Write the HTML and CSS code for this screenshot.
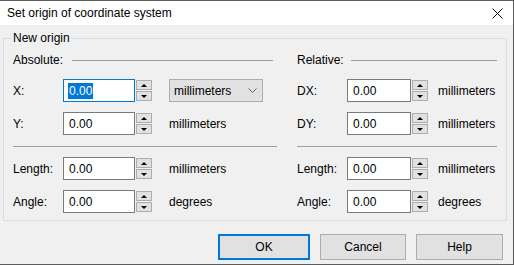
FILE: index.html
```
<!DOCTYPE html>
<html lang="en">
<head>
    <meta charset="UTF-8">
    <title>Set origin of coordinate system</title>
    <link rel="stylesheet" href="styles.css">
</head>
<body>
    <div class="window">
        <div class="titlebar">
            <span class="title">Set origin of coordinate system</span>
            <svg class="close" width="11" height="11" viewBox="0 0 11 11">
                <path d="M0.5 0.5 L10.5 10.5 M10.5 0.5 L0.5 10.5" stroke="#000" stroke-width="1"/>
            </svg>
        </div>

        <div class="content">
            <div class="group">
                <span class="legend">New origin</span>
                <div class="columns">
                    <div class="column left">
                        <div class="header">
                            <span>Absolute:</span>
                            <span class="line"></span>
                        </div>
                        <div class="row first">
                            <span class="label">X:</span>
                            <div class="field focused"><span class="selected">0.00</span></div>
                            <div class="spin"><span class="up"></span><span class="down"></span></div>
                            <div class="combo">
                                <span>millimeters</span>
                                <svg width="9" height="5" viewBox="0 0 9 5">
                                    <path d="M0.5 0.5 L4.5 4.5 L8.5 0.5" fill="none" stroke="#606060" stroke-width="1"/>
                                </svg>
                            </div>
                        </div>
                        <div class="row">
                            <span class="label">Y:</span>
                            <div class="field">0.00</div>
                            <div class="spin"><span class="up"></span><span class="down"></span></div>
                            <span class="unit">millimeters</span>
                        </div>
                        <div class="separator"></div>
                        <div class="row">
                            <span class="label">Length:</span>
                            <div class="field">0.00</div>
                            <div class="spin"><span class="up"></span><span class="down"></span></div>
                            <span class="unit">millimeters</span>
                        </div>
                        <div class="row">
                            <span class="label">Angle:</span>
                            <div class="field">0.00</div>
                            <div class="spin"><span class="up"></span><span class="down"></span></div>
                            <span class="unit">degrees</span>
                        </div>
                    </div>

                    <div class="column right">
                        <div class="header">
                            <span>Relative:</span>
                            <span class="line"></span>
                        </div>
                        <div class="row first">
                            <span class="label">DX:</span>
                            <div class="field">0.00</div>
                            <div class="spin"><span class="up"></span><span class="down"></span></div>
                            <span class="unit">millimeters</span>
                        </div>
                        <div class="row">
                            <span class="label">DY:</span>
                            <div class="field">0.00</div>
                            <div class="spin"><span class="up"></span><span class="down"></span></div>
                            <span class="unit">millimeters</span>
                        </div>
                        <div class="separator"></div>
                        <div class="row">
                            <span class="label">Length:</span>
                            <div class="field">0.00</div>
                            <div class="spin"><span class="up"></span><span class="down"></span></div>
                            <span class="unit">millimeters</span>
                        </div>
                        <div class="row">
                            <span class="label">Angle:</span>
                            <div class="field">0.00</div>
                            <div class="spin"><span class="up"></span><span class="down"></span></div>
                            <span class="unit">degrees</span>
                        </div>
                    </div>
                </div>
            </div>

            <div class="buttons">
                <button type="button" class="ok">OK</button>
                <button type="button" class="cancel">Cancel</button>
                <button type="button" class="help">Help</button>
            </div>
        </div>
    </div>
</body>
</html>
```

FILE: styles.css
```
body {
    margin: 0;
    font-family: "Liberation Sans", Arial, sans-serif;
    font-size: 12px;
    color: #000;
    background: #f0f0f0;
}
.window {
    width: 514px;
    height: 265px;
    box-sizing: border-box;
    border-top: 1px solid #5c5c5c;
    border-right: 1px solid #5c5c5c;
    border-bottom: 1px solid #5c5c5c;
    display: flex;
    flex-direction: column;
}
.titlebar {
    height: 24px;
    background: #fff;
    display: flex;
    align-items: center;
    padding: 0 10px 0 7px;
}
.title {
    flex: 1;
}
.close {
    display: block;
    margin-top: 1px;
}
.content {
    flex: 1;
    background: #f0f0f0;
}
.group {
    width: 504px;
    box-sizing: border-box;
    margin: 13px 0 0 3px;
    border: 1px solid #dcdcdc;
    padding: 0 9px 7px 9px;
}
.legend {
    display: block;
    width: fit-content;
    margin: -8px 0 0 -1px;
    padding: 0 1px;
    line-height: 14px;
    background: #f0f0f0;
}
.columns {
    display: grid;
    grid-template-columns: 264px 200px;
    column-gap: 20px;
    margin-top: 8px;
}
.column {
    display: flex;
    flex-direction: column;
}
.header {
    display: flex;
    align-items: center;
    height: 14px;
    gap: 9px;
}
.header .line {
    flex: 1;
    border-top: 1px solid #a0a0a0;
}
.left .header .line {
    margin-right: 4px;
}
.right .header {
    gap: 7px;
}
.row {
    display: flex;
    align-items: center;
    height: 23px;
    margin-top: 10px;
}
.row.first {
    margin-top: 12px;
}
.label {
    width: 50px;
    flex: none;
}
.field {
    width: 72px;
    height: 23px;
    box-sizing: border-box;
    border: 1px solid #7a7a7a;
    background: #fff;
    display: flex;
    align-items: center;
    padding-left: 5px;
}
.right .field {
    width: 64px;
}
.field.focused {
    border-color: #0078d7;
    padding-left: 4px;
}
.selected {
    background: #0078d7;
    color: #fff;
    padding: 1px 1px;
}
.spin {
    width: 16px;
    height: 21px;
    margin-left: 1px;
    display: flex;
    flex-direction: column;
    gap: 1px;
}
.spin span {
    flex: 1;
    box-sizing: border-box;
    border: 1px solid #adadad;
    background: #e1e1e1;
    display: flex;
    align-items: center;
    justify-content: center;
}
.spin .up::after {
    content: "";
    border-left: 3px solid transparent;
    border-right: 3px solid transparent;
    border-bottom: 3px solid #000;
}
.spin .down::after {
    content: "";
    border-left: 3px solid transparent;
    border-right: 3px solid transparent;
    border-top: 3px solid #000;
}
.unit {
    margin-left: 17px;
}
.right .unit {
    margin-left: 10px;
}
.combo {
    margin-left: 17px;
    width: 94px;
    height: 23px;
    box-sizing: border-box;
    border: 1px solid #adadad;
    background: #e1e1e1;
    display: flex;
    align-items: center;
    justify-content: space-between;
    padding: 0 5px 0 4px;
}
.separator {
    border-top: 1px solid #a0a0a0;
    margin-top: 11px;
}
.buttons {
    display: flex;
    justify-content: flex-end;
    gap: 10px;
    margin: 13px 10px 0 0;
}
button {
    height: 26px;
    box-sizing: border-box;
    border: 1px solid #adadad;
    background: #e1e1e1;
    font-family: inherit;
    font-size: 12px;
    color: #000;
    padding: 0;
}
button.ok {
    width: 92px;
    border: 2px solid #0078d7;
}
button.cancel {
    width: 86px;
}
button.help {
    width: 87px;
}
```
